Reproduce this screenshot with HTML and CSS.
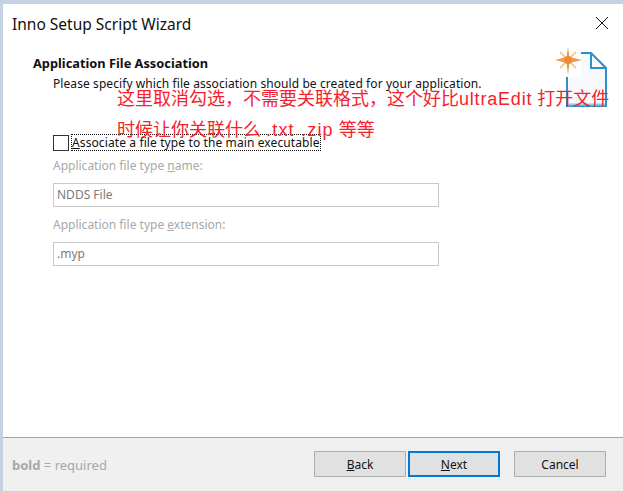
FILE: index.html
```html
<!DOCTYPE html>
<html lang="en">
<head>
    <meta charset="UTF-8">
    <meta name="viewport" content="width=device-width, initial-scale=1.0">
    <title>Inno Setup Script Wizard</title>
    <link rel="stylesheet" href="styles.css">
</head>
<body>
    <div class="window">
        <div class="title-bar">
            <span class="title">Inno Setup Script Wizard</span>
            <svg class="close" width="14" height="14" viewBox="0 0 14 14">
                <path d="M1 1 L13 13 M13 1 L1 13" stroke="#111" stroke-width="1" fill="none"/>
            </svg>
        </div>

        <div class="content">
            <div class="page-head">
                <h2>Application File Association</h2>
                <p>Please specify which file association should be created for your application.</p>
                <svg class="page-icon" width="54" height="62" viewBox="0 0 54 62">
                    <path d="M26 6 H36 L51 21 V59 H12 V30 H26 Z" fill="#f8f9fc"/>
                    <path d="M26 6 H36 L51 21 V59 H12 V30" fill="none" stroke="#2f8fcb" stroke-width="2"/>
                    <path d="M36 6 V21 H51" fill="none" stroke="#2f8fcb" stroke-width="2"/>
                    <path d="M13 57.5 H50" stroke="#9cc8e6" stroke-width="2"/>
                    <path d="M5 5 L21 21 M21 5 L5 21" stroke="#f2b98a" stroke-width="1.6"/>
                    <polygon points="13,0 14.5,10 27,13 14.5,16 13,28 11.5,16 0,13 11.5,10" fill="#ee9a52"/>
                    <circle cx="13" cy="13" r="4" fill="#ed8a34"/>
                </svg>
            </div>

            <div class="check-row">
                <span class="checkbox"></span>
                <span class="check-label"><u>A</u>ssociate a file type to the main executable</span>
            </div>

            <label class="field-label field-label-first">Application file type <u>n</u>ame:</label>
            <div class="field">NDDS File</div>
            <label class="field-label">Application file type <u>e</u>xtension:</label>
            <div class="field">.myp</div>

            <div class="note note-1">这里取消勾选，不需要关联格式，这个好比<span class="latin">ultraEdit</span> 打开文件</div>
            <div class="note note-2">时候让你关联什么 <span class="latin">.txt .zip</span> 等等</div>
        </div>

        <div class="footer">
            <span class="legend"><b>bold</b> = required</span>
            <div class="buttons">
                <button class="btn"><u>B</u>ack</button>
                <button class="btn btn-default"><u>N</u>ext</button>
                <button class="btn btn-cancel">Cancel</button>
            </div>
        </div>
    </div>
</body>
</html>
```

FILE: styles.css
```css
html, body {
    height: 100%;
}
body {
    margin: 0;
    background: #c6d1e3;
    font-family: "Noto Sans", "Liberation Sans", sans-serif;
    font-size: 12px;
    overflow: hidden;
}
.window {
    height: 487px;
    margin: 4px 0 0 3px;
    background: white;
    display: flex;
    flex-direction: column;
}
.title-bar {
    height: 38px;
    padding: 0 14px 0 9px;
    display: flex;
    align-items: center;
    justify-content: space-between;
}
.title {
    font-size: 15.5px;
    color: #111;
    padding-top: 2px;
}
.close {
    margin-bottom: 1px;
}
.content {
    flex: 1;
    position: relative;
    padding: 0 0 0 30px;
}
.page-head {
    position: relative;
    height: 93px;
    padding-top: 12px;
    box-sizing: border-box;
}
.page-head h2 {
    margin: 0;
    font-size: 12.8px;
    line-height: 18px;
    color: #111;
}
.page-head p {
    margin: 4px 0 0 20px;
    font-size: 12px;
    letter-spacing: 0.08px;
    line-height: 16px;
    color: #111;
}
.page-icon {
    position: absolute;
    right: 14px;
    top: 5px;
}
.check-row {
    display: flex;
    align-items: center;
    gap: 2px;
    margin-left: 20px;
    margin-top: -1px;
}
.checkbox {
    width: 14px;
    height: 14px;
    border: 1px solid #333;
}
.check-label {
    border: 1px dotted #111;
    line-height: 15px;
    color: #111;
    font-size: 12px;
    letter-spacing: 0.11px;
}
.field-label {
    display: block;
    margin: 10px 0 9px 20px;
    line-height: 16px;
    color: #a8a8a8;
}
.field-label-first {
    margin: 7px 0 9px 20px;
}
.field {
    width: 381px;
    height: 22px;
    margin: 0 0 10px 20px;
    padding-left: 3px;
    border: 1px solid #c9c9c9;
    line-height: 21px;
    color: #7a7a7a;
}
.note {
    position: absolute;
    left: 114px;
    font-family: "Liberation Sans", "Noto Sans CJK SC", sans-serif;
    font-size: 18px;
    line-height: 24px;
    color: #f5222d;
    white-space: nowrap;
}
.note-1 {
    top: 45px;
}
.note-2 {
    top: 76px;
}
.latin {
    letter-spacing: 0.8px;
}
.note-2 .latin {
    letter-spacing: 1.2px;
}
.footer {
    height: 52px;
    padding: 0 17px 1px 9px;
    border-top: 1px solid #a5a5a5;
    background: #f0f0f0;
    display: flex;
    align-items: center;
    justify-content: space-between;
}
.legend {
    color: #a8a8a8;
    font-size: 13px;
    margin-top: 2px;
}
.buttons {
    display: flex;
    gap: 2px;
}
.btn {
    width: 92px;
    height: 26px;
    padding: 0;
    border: 1px solid #adadad;
    background: #e1e1e1;
    color: #111;
    font-family: inherit;
    font-size: 12px;
}
.btn-default {
    border: 2px solid #0078d7;
}
.btn-cancel {
    margin-left: 12px;
}
```
